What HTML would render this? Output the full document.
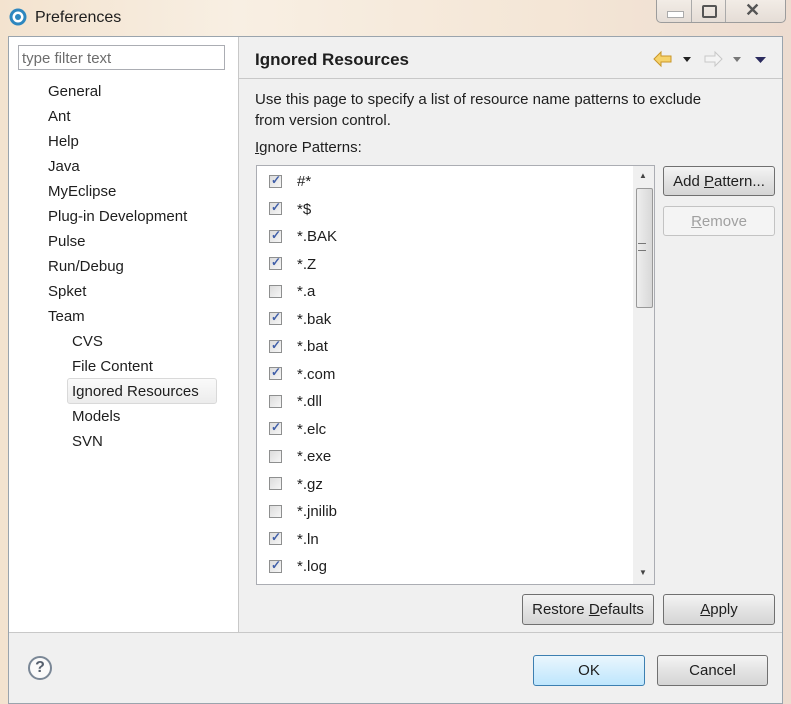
<!DOCTYPE html>
<html><head><style>
body{margin:0;width:791px;height:704px;overflow:hidden;background:linear-gradient(90deg,#f3e3cf,#f8efe3 30%,#f4e6d6 70%,#eddcd0);font-family:"Liberation Sans",sans-serif;font-size:15px;color:#1e1e1e;position:relative}
.a{position:absolute}
.win{left:8px;top:36px;width:775px;height:668px;background:#f0f0f0;border:1px solid #9aa4ad;box-sizing:border-box}
.btn{position:absolute;box-sizing:border-box;border:1px solid #707070;border-radius:3px;background:linear-gradient(#f4f4f4,#e3e3e3 50%,#d5d5d5);text-align:center;line-height:30px;font-size:15px}
.cb{position:absolute;left:12px;width:13px;height:13px;border:1px solid #8e8f8f;background:linear-gradient(135deg,#dcdcdc,#f6f6f6);box-sizing:border-box}
.cb.c::after{content:"✓";position:absolute;left:1px;top:-3px;font-size:12px;color:#3f5ea8;font-weight:bold}
.it{position:absolute;left:40px;margin-top:2px}
u{text-decoration:underline}
</style></head><body>
<svg class="a" style="left:8px;top:7px" width="20" height="20"><circle cx="10" cy="10" r="8.5" fill="#2e87bf"/><circle cx="10" cy="10" r="5.5" fill="#fff"/><circle cx="10" cy="10" r="3" fill="#2e87bf"/></svg>
<div class="a" style="left:35px;top:9px;font-size:16px">Preferences</div>
<div class="a" style="left:656px;top:0;width:128px;height:22px;border:1px solid #9c9c9c;border-top:none;border-radius:0 0 5px 5px;background:linear-gradient(#f2ece6,#e5ddd6)"></div>
<div class="a" style="left:691px;top:0;width:1px;height:22px;background:#aaa"></div>
<div class="a" style="left:725px;top:0;width:1px;height:22px;background:#aaa"></div>
<div class="a" style="left:667px;top:11px;width:15px;height:5px;border:1px solid #aaa;background:#fff"></div>
<div class="a" style="left:702px;top:5px;width:11px;height:9px;border:2px solid #555;border-radius:2px"></div>
<div class="a" style="left:745px;top:0px;font-size:18px;color:#555;font-weight:bold">✕</div>
<div class="a win"></div>
<div class="a" style="left:9px;top:37px;width:229px;height:595px;background:#fff;border-right:1px solid #c8c8c8"></div>
<div class="a" style="left:18px;top:45px;width:207px;height:25px;border:1px solid #abadb3;box-sizing:border-box;background:#fff;color:#6d6d6d;padding:4px 0 0 3px">type filter text</div>
<div class="a" style="left:48px;top:79px;line-height:25px">General<br>Ant<br>Help<br>Java<br>MyEclipse<br>Plug-in Development<br>Pulse<br>Run/Debug<br>Spket<br>Team</div>
<div class="a" style="left:67px;top:378px;width:148px;height:24px;border:1px solid #d9d9d9;border-radius:3px;background:linear-gradient(#fafafa,#ececec)"></div>
<div class="a" style="left:72px;top:329px;line-height:25px">CVS<br>File Content<br>Ignored Resources<br>Models<br>SVN</div>
<div class="a" style="left:239px;top:78px;width:543px;height:1px;background:#c8c8c8"></div>
<div class="a" style="left:255px;top:50px;font-size:17px;font-weight:bold">Ignored Resources</div>
<svg class="a" style="left:652px;top:50px" width="120" height="18"><path d="M2 9 L9 2 V6 H19 V12 H9 V16 Z" fill="#f6d36b" stroke="#c9962a"/><path d="M31 7 h8 l-4 5z" fill="#222"/><path d="M70 9 L63 2 V6 H53 V12 H63 V16 Z" fill="#f4f4f4" stroke="#c8c8c8"/><path d="M81 7 h8 l-4 5z" fill="#777"/><path d="M103 7 h11 l-5.5 6z" fill="#2b2b5e"/></svg>
<div class="a" style="left:255px;top:89px;line-height:21px">Use this page to specify a list of resource name patterns to exclude<br>from version control.</div>
<div class="a" style="left:255px;top:139px"><u>I</u>gnore Patterns:</div>
<div class="a" style="left:256px;top:165px;width:399px;height:420px;border:1px solid #abadb3;box-sizing:border-box;background:#fff">
<div class="a" style="left:376px;top:0;width:21px;height:418px;background:#f0f0f0"></div>
<div class="a" style="left:379px;top:22px;width:15px;height:118px;border:1px solid #999;border-radius:2px;background:linear-gradient(90deg,#eee,#d8d8d8)"></div>
<div class="a" style="left:382px;top:5px;font-size:8px;color:#444">▲</div>
<div class="a" style="left:382px;top:402px;font-size:8px;color:#444">▼</div>
<div class="a" style="left:381px;top:77px;width:8px;height:6px;border-top:1px solid #777;border-bottom:1px solid #777"></div>
<div class="cb c" style="top:9px"></div><div class="it" style="top:5px">#*</div>
<div class="cb c" style="top:36px"></div><div class="it" style="top:33px">*$</div>
<div class="cb c" style="top:64px"></div><div class="it" style="top:60px">*.BAK</div>
<div class="cb c" style="top:91px"></div><div class="it" style="top:88px">*.Z</div>
<div class="cb" style="top:119px"></div><div class="it" style="top:115px">*.a</div>
<div class="cb c" style="top:146px"></div><div class="it" style="top:143px">*.bak</div>
<div class="cb c" style="top:174px"></div><div class="it" style="top:170px">*.bat</div>
<div class="cb c" style="top:201px"></div><div class="it" style="top:198px">*.com</div>
<div class="cb" style="top:229px"></div><div class="it" style="top:225px">*.dll</div>
<div class="cb c" style="top:256px"></div><div class="it" style="top:253px">*.elc</div>
<div class="cb" style="top:284px"></div><div class="it" style="top:280px">*.exe</div>
<div class="cb" style="top:311px"></div><div class="it" style="top:308px">*.gz</div>
<div class="cb" style="top:339px"></div><div class="it" style="top:335px">*.jnilib</div>
<div class="cb c" style="top:366px"></div><div class="it" style="top:363px">*.ln</div>
<div class="cb c" style="top:394px"></div><div class="it" style="top:390px">*.log</div>
</div>
<div class="btn" style="left:663px;top:166px;width:112px;height:30px;line-height:29px">Add <u>P</u>attern...</div>
<div class="btn" style="left:663px;top:206px;width:112px;height:30px;line-height:29px;border-color:#c3c3c3;background:#f4f4f4;color:#a0a0a0"><u>R</u>emove</div>
<div class="btn" style="left:522px;top:594px;width:132px;height:31px">Restore <u>D</u>efaults</div>
<div class="btn" style="left:663px;top:594px;width:112px;height:31px"><u>A</u>pply</div>
<div class="a" style="left:9px;top:632px;width:773px;height:1px;background:#c8c8c8"></div>
<div class="a" style="left:28px;top:656px;width:24px;height:24px;border:2px solid #7a8796;border-radius:50%;box-sizing:border-box;text-align:center;font-weight:bold;color:#56606e;line-height:20px;font-size:16px;background:#fafafa">?</div>
<div class="btn" style="left:533px;top:655px;width:112px;height:31px;border-color:#3c7fb1;background:linear-gradient(#eaf6fd,#bee6fd)">OK</div>
<div class="btn" style="left:657px;top:655px;width:111px;height:31px">Cancel</div>
</body></html>
